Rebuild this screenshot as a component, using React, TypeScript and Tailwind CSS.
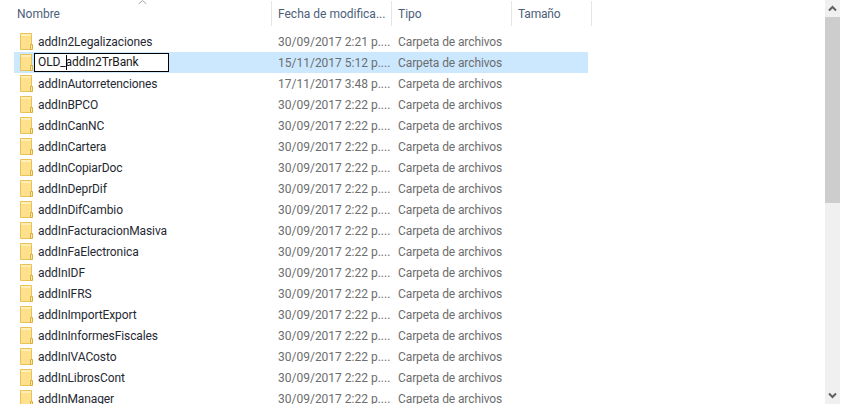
const font = "[font-family:'Roboto','Open_Sans',sans-serif]"

const rows = [
  { name: 'addIn2Legalizaciones', date: '30/09/2017 2:21 p....' },
  { name: 'OLD_addIn2TrBank', date: '15/11/2017 5:12 p....', renaming: true },
  { name: 'addInAutorretenciones', date: '17/11/2017 3:48 p....' },
  { name: 'addInBPCO', date: '30/09/2017 2:22 p....' },
  { name: 'addInCanNC', date: '30/09/2017 2:22 p....' },
  { name: 'addInCartera', date: '30/09/2017 2:22 p....' },
  { name: 'addInCopiarDoc', date: '30/09/2017 2:22 p....' },
  { name: 'addInDeprDif', date: '30/09/2017 2:22 p....' },
  { name: 'addInDifCambio', date: '30/09/2017 2:22 p....' },
  { name: 'addInFacturacionMasiva', date: '30/09/2017 2:22 p....' },
  { name: 'addInFaElectronica', date: '30/09/2017 2:22 p....' },
  { name: 'addInIDF', date: '30/09/2017 2:22 p....' },
  { name: 'addInIFRS', date: '30/09/2017 2:22 p....' },
  { name: 'addInImportExport', date: '30/09/2017 2:22 p....' },
  { name: 'addInInformesFiscales', date: '30/09/2017 2:22 p....' },
  { name: 'addInIVACosto', date: '30/09/2017 2:22 p....' },
  { name: 'addInLibrosCont', date: '30/09/2017 2:22 p....' },
  { name: 'addInManager', date: '30/09/2017 2:22 p....' },
]

function FolderIcon() {
  return (
    <svg width="13" height="17" viewBox="0 0 13 17" className="shrink-0">
      <path d="M0.5 0.5H11.5V16.5H0.5Z" fill="#ffe08c" stroke="#e8c255" />
      <path d="M1 1H11V3H1Z" fill="#ffeeb5" />
      <path d="M10.5 11.5H12.5V16.5H10.5Z" fill="#ffe9a6" stroke="#d9ae3f" />
    </svg>
  )
}

function Chevron({ up }: { up?: boolean }) {
  return (
    <svg width="9" height="7" viewBox="0 0 9 7">
      <path d={up ? 'M1 5.5L4.5 2L8 5.5' : 'M1 1.5L4.5 5L8 1.5'} fill="none" stroke="#606060" strokeWidth="2" />
    </svg>
  )
}

function HeaderCell({ label, className }: { label: string; className: string }) {
  return (
    <div className={`h-[25px] flex items-center border-r border-[#e5e5e5] text-[#4c607a] ${className}`}>
      {label}
    </div>
  )
}

export default function App() {
  return (
    <div className={`relative w-[841px] h-[404px] overflow-hidden bg-white flex text-[12px] ${font}`}>
      <div className="flex-1 min-w-0">
        <div className="flex h-[25px] mt-px">
          <HeaderCell label="Nombre" className="w-[272px] pl-[17px]" />
          <HeaderCell label="Fecha de modifica..." className="w-[120px] pl-[6px]" />
          <HeaderCell label="Tipo" className="w-[120px] pl-[6px]" />
          <HeaderCell label="Tamaño" className="w-[80px] pl-[6px] tracking-[-0.2px]" />
        </div>
        <div className="mt-[5px] ml-[14px] w-[574px]">
          {rows.map(row => (
            <div key={row.name} className={`h-[21px] flex items-center ${row.renaming ? 'bg-[#cce8ff]' : ''}`}>
              <div className="w-[258px] flex items-center pl-[6px]">
                <FolderIcon />
                {row.renaming ? (
                  <div className="relative ml-[1px] w-[135px] h-[19px] border border-black bg-white pl-[3px] text-[#1a1a1a] leading-[17px] tracking-[-0.1px]">
                    {row.name}
                    <span className="absolute left-[31px] top-px h-[15px] w-px bg-black" />
                  </div>
                ) : (
                  <span className="ml-[5px] text-[#1f2933] tracking-[-0.1px]">{row.name}</span>
                )}
              </div>
              <div className="w-[120px] pl-[6px] text-[#6d6d6d]">{row.date}</div>
              <div className="w-[120px] pl-[6px] text-[#6d6d6d] tracking-[-0.1px]">Carpeta de archivos</div>
            </div>
          ))}
        </div>
      </div>
      <div className="w-[15px] mr-px bg-[#f0f0f0] flex flex-col items-center">
        <div className="h-[17px] flex items-center justify-center shrink-0"><Chevron up /></div>
        <div className="w-full h-[186px] bg-[#cdcdcd]" />
        <div className="flex-1" />
        <div className="h-[17px] flex items-center justify-center shrink-0"><Chevron /></div>
      </div>
      <svg width="9" height="4" viewBox="0 0 9 4" className="absolute left-[138px] top-0">
        <path d="M0.5 4L4.5 0.5L8.5 4" fill="none" stroke="#a0a6ad" />
      </svg>
    </div>
  )
}
